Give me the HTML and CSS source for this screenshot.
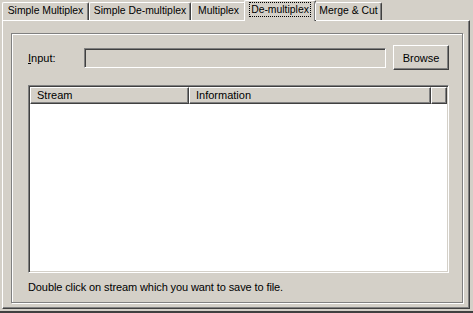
FILE: index.html
```html
<!DOCTYPE html>
<html lang="en">
<head>
  <meta charset="UTF-8">
  <title>De-multiplex</title>
  <link rel="stylesheet" href="styles.css">
</head>
<body>

  <div class="tabs">
    <div class="tab tab-1">Simple Multiplex</div>
    <div class="tab tab-2">Simple De-multiplex</div>
    <div class="tab tab-3">Multiplex</div>
    <div class="tab tab-4 active"><span class="focus">De-multiplex</span></div>
    <div class="tab tab-5">Merge &amp; Cut</div>
  </div>

  <div class="panel">
    <div class="group">
      <div class="input-row">
        <label class="label"><u>I</u>nput:</label>
        <div class="field"></div>
        <button class="btn">Browse</button>
      </div>

      <div class="list">
        <div class="list-head">
          <div class="col col-stream">Stream</div>
          <div class="col col-info">Information</div>
          <div class="col col-rest"></div>
        </div>
        <div class="list-body"></div>
      </div>

      <div class="status">Double click on stream which you want to save to file.</div>
    </div>
  </div>

</body>
</html>
```

FILE: styles.css
```css
* {
  box-sizing: border-box;
  margin: 0;
  padding: 0;
}
body {
  width: 473px;
  height: 313px;
  background: #d4d0c8;
  font-family: "Liberation Sans", Arial, sans-serif;
  font-size: 11px;
  color: #000;
  overflow: hidden;
  border-bottom: 2px solid #404040;
}

/* tab strip */
.tabs {
  display: flex;
  height: 20px;
  padding-left: 2px;
  align-items: flex-end;
  position: relative;
  z-index: 1;
}
.tab {
  height: 18px;
  line-height: 15px;
  font-size: 10.4px;
  text-align: center;
  border-top: 1px solid #fff;
  border-left: 1px solid #fff;
  border-right: 1px solid #404040;
  box-shadow: inset -1px 0 0 #808080;
  border-radius: 2px 2px 0 0;
  white-space: nowrap;
}
.tab-1 { width: 87px; }
.tab-2 { width: 102px; }
.tab-3 { width: 55px; }
.tab-4 { width: 70px; }
.tab-5 { width: 67px; }
.tab.active {
  height: 21px;
  line-height: 17px;
  margin: 0 -1px -1px -2px;
  width: 72px;
  background: #d4d0c8;
}
.focus {
  display: inline-block;
  line-height: 13px;
  padding: 0 1px;
  outline: 1px dotted #000;
}

/* tab page */
.panel {
  height: 289px;
  margin: 0 3px 0 2px;
  border-top: 1px solid #fff;
  border-left: 1px solid #fff;
  border-right: 1px solid #404040;
  border-bottom: 1px solid #404040;
  box-shadow: inset -1px -1px 0 #808080;
  padding: 12px 6px 0 8px;
}
.group {
  height: 270px;
  border: 1px solid #808080;
  box-shadow: inset 1px 1px 0 #fff, 1px 1px 0 #fff;
  padding: 11px 13px 0 16px;
  display: flex;
  flex-direction: column;
}

.input-row {
  display: flex;
  align-items: center;
  height: 25px;
}
.label {
  width: 56px;
}
.field {
  width: 302px;
  height: 20px;
  border-top: 1px solid #808080;
  border-left: 1px solid #808080;
  border-right: 1px solid #fff;
  border-bottom: 1px solid #fff;
  box-shadow: inset 1px 1px 0 #404040;
}
.btn {
  margin-left: auto;
  width: 56px;
  height: 25px;
  font: inherit;
  color: #000;
  background: #d4d0c8;
  border-top: 1px solid #fff;
  border-left: 1px solid #fff;
  border-right: 1px solid #404040;
  border-bottom: 1px solid #404040;
  box-shadow: inset -1px -1px 0 #808080;
}

/* list view */
.list {
  margin-top: 15px;
  height: 188px;
  border-top: 1px solid #808080;
  border-left: 1px solid #808080;
  border-right: 1px solid #fff;
  border-bottom: 1px solid #fff;
  box-shadow: inset 1px 1px 0 #404040, inset -1px -1px 0 #d4d0c8;
  padding: 1px;
  display: flex;
  flex-direction: column;
}
.list-head {
  display: flex;
  height: 17px;
}
.col {
  height: 17px;
  line-height: 15px;
  padding-left: 6px;
  border-top: 1px solid #fff;
  border-left: 1px solid #fff;
  border-right: 1px solid #404040;
  border-bottom: 1px solid #404040;
  box-shadow: inset -1px -1px 0 #808080;
}
.col-stream { width: 159px; }
.col-info { width: 242px; }
.col-rest { flex: 1; }
.list-body {
  flex: 1;
  background: #fff;
}

.status {
  margin-top: 8px;
  line-height: 12px;
  letter-spacing: -0.1px;
}
```
